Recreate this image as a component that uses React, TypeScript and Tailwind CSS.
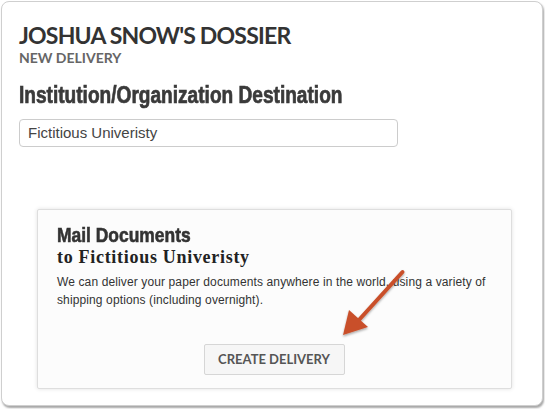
import React from "react";

export default function App() {
  return (
    <div className="w-[545px] h-[409px] bg-white pt-px pl-px">
      <div className="w-[542px] h-[405px] rounded-[8px] border border-[#cfcfcf] bg-white shadow-[1px_2px_2px_rgba(0,0,0,0.35)] pl-[17px] pr-[17px] pt-[20px] relative">
        <h1 className="font-['Lato',sans-serif] font-bold text-[23px] leading-[27px] text-[#333] tracking-[-0.8px]">
          JOSHUA SNOW'S DOSSIER
        </h1>
        <div className="mt-[1px] font-['Lato',sans-serif] font-bold text-[14px] leading-[16px] text-[#666]">
          NEW DELIVERY
        </div>
        <h2 className="mt-[16px] h-[26px] whitespace-nowrap origin-left scale-x-[0.83] font-['Liberation_Sans',sans-serif] font-bold text-[23px] leading-[26px] text-[#3a3a3a] [-webkit-text-stroke:0.7px_#3a3a3a]">
          Institution/Organization Destination
        </h2>
        <div className="mt-[11px] w-[379px] h-[28px] border border-[#ccc] rounded-[4px] flex items-center pl-[8px] font-['Liberation_Sans',sans-serif] text-[15px] text-[#444]">
          Fictitious Univeristy
        </div>
        <div className="mt-[62px] ml-[18px] w-[475px] h-[180px] border border-[#dedede] rounded-[2px] bg-[#fcfcfc] shadow-[0_0_4px_rgba(0,0,0,0.12)] pl-[19px] pr-[20px] pt-[12px] flex flex-col">
          <div className="h-[25px] whitespace-nowrap origin-left scale-x-[0.83] font-['Liberation_Sans',sans-serif] font-bold text-[21px] leading-[25px] text-[#333] [-webkit-text-stroke:0.6px_#333]">
            Mail Documents
          </div>
          <div className="font-['Liberation_Serif',serif] font-bold text-[18px] leading-[21px] tracking-[0.7px] text-[#222]">
            to Fictitious Univeristy
          </div>
          <p className="mt-[5px] font-['Liberation_Sans',sans-serif] text-[12px] leading-[18px] tracking-[0.12px] text-[#333]">
            We can deliver your paper documents anywhere in the world, using a variety of shipping options (including overnight).
          </p>
          <div className="mt-auto mb-[13px] flex justify-center">
            <div className="w-[141px] h-[31px] border border-[#d6d6d6] rounded-[2px] bg-[#f6f6f6] flex items-center justify-center font-['Lato',sans-serif] font-bold text-[13px] text-[#555]">
              CREATE DELIVERY
            </div>
          </div>
        </div>
        <svg className="absolute left-[320px] top-[255px]" width="100" height="100" viewBox="0 0 100 100">
          <defs>
            <filter id="sh" x="-20%" y="-20%" width="140%" height="140%">
              <feDropShadow dx="0" dy="1.5" stdDeviation="1.2" floodColor="#000" floodOpacity="0.35" />
            </filter>
          </defs>
          <g filter="url(#sh)" fill="#c9502b" stroke="none">
            <line x1="80.5" y1="15" x2="36" y2="64" stroke="#c9502b" strokeWidth="4" strokeLinecap="round" />
            <path d="M21 78 L27 53 L46 70 Z" />
          </g>
        </svg>
      </div>
    </div>
  );
}
